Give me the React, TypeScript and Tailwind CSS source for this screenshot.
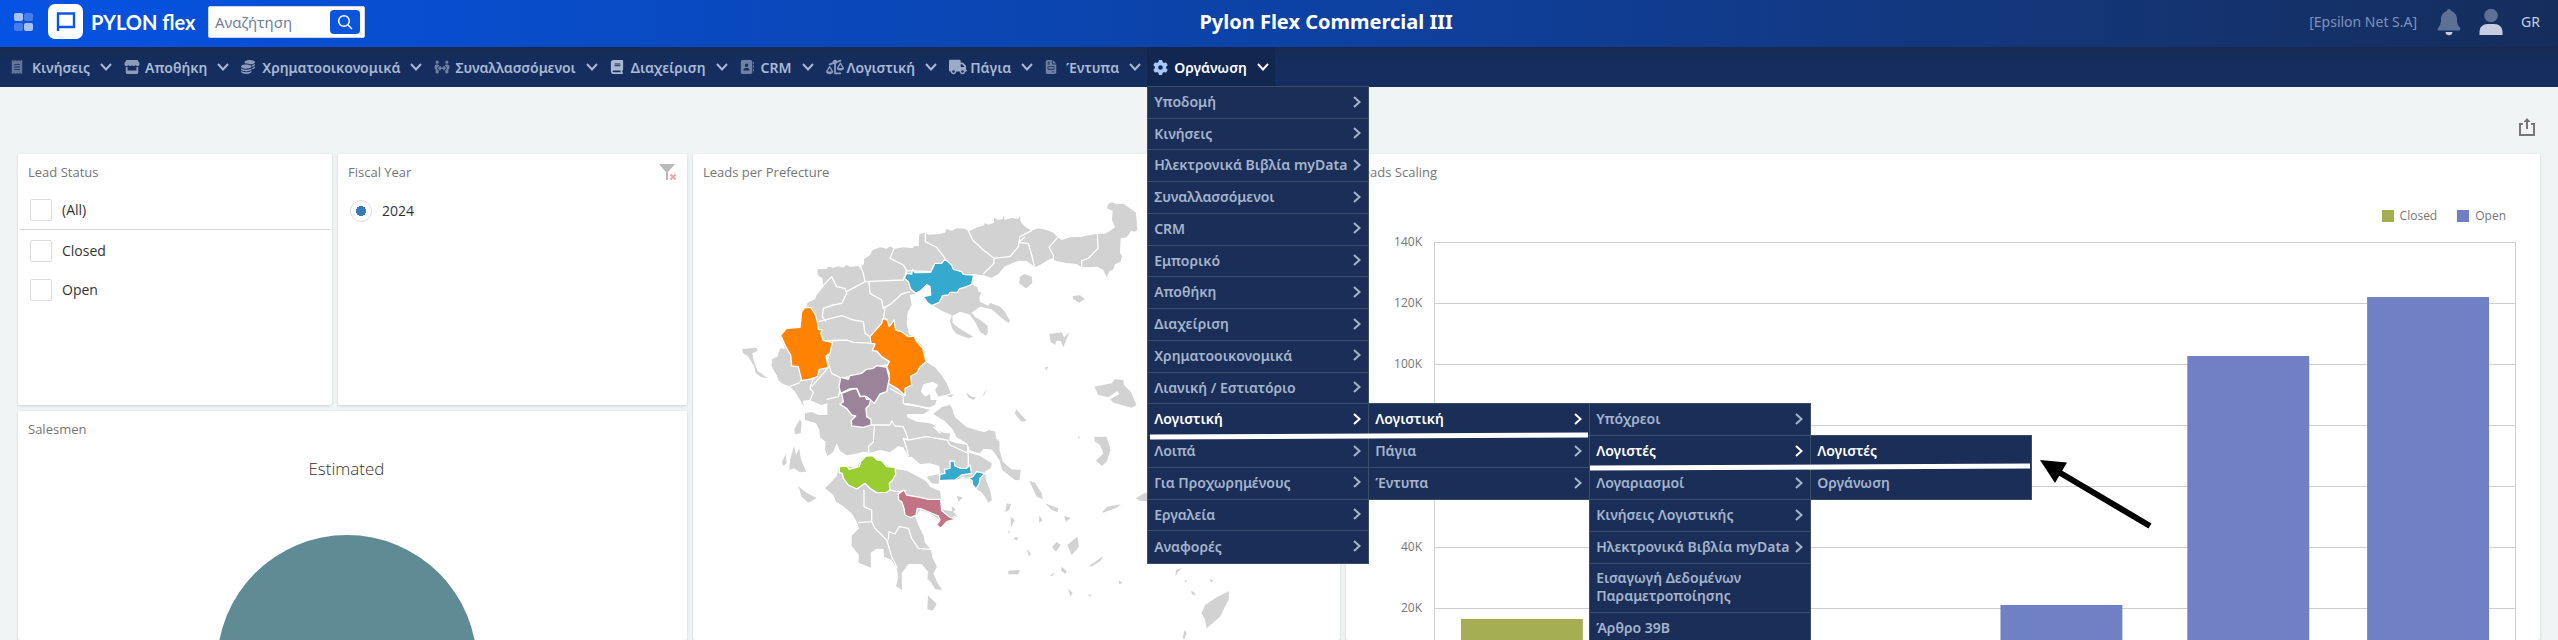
import React from "react";
import {
  FaAddressBook,
  FaBook,
  FaCoins,
  FaFileInvoice,
  FaGear,
  FaPeopleArrows,
  FaReceipt,
  FaScaleUnbalanced,
  FaStore,
  FaTruck,
} from "react-icons/fa6";

type MenuItem = { label: string; leaf?: boolean; active?: boolean; menu?: React.ReactNode };

function ChevronDown() {
  return (
    <svg viewBox="0 0 12 8" className="h-2 w-3" fill="none" stroke="currentColor" strokeWidth="2">
      <path d="M1 1l5 5.5L11 1" />
    </svg>
  );
}

function ChevronRight() {
  return (
    <svg viewBox="0 0 8 12" className="h-3 w-2 shrink-0" fill="none" stroke="currentColor" strokeWidth="2">
      <path d="M1 1l5.5 5L1 11" />
    </svg>
  );
}

function Menu({ items, className }: { items: MenuItem[]; className: string }) {
  return (
    <ul className={`absolute w-[222px] border border-[#3b5066] bg-[#1b2e57] ${className}`}>
      {items.map((item, i) => (
        <li
          key={item.label}
          className={`relative font-semibold ${i < items.length - 1 ? "border-b border-[#3b5066]" : ""} ${item.active ? "text-white" : "text-[#a3b4ce]"}`}
        >
          <button type="button" className="flex h-full min-h-[31px] w-full items-center justify-between pr-[7px] pb-0.5 pl-1.5 text-left leading-[17px]">
            <span>{item.label}</span>
            {!item.leaf && <ChevronRight />}
          </button>
          {item.menu}
        </li>
      ))}
    </ul>
  );
}

const accountantsMenu: MenuItem[] = [
  { label: "Λογιστές", active: true, leaf: true },
  { label: "Οργάνωση", leaf: true },
];

const accountingDetailMenu: MenuItem[] = [
  { label: "Υπόχρεοι" },
  {
    label: "Λογιστές",
    active: true,
    menu: <Menu items={accountantsMenu} className="-top-px left-full" />,
  },
  { label: "Λογαριασμοί" },
  { label: "Κινήσεις Λογιστικής" },
  { label: "Ηλεκτρονικά Βιβλία myData" },
  { label: "Εισαγωγή Δεδομένων Παραμετροποίησης", leaf: true },
  { label: "Άρθρο 39Β", leaf: true },
];

const accountingMenu: MenuItem[] = [
  {
    label: "Λογιστική",
    active: true,
    menu: (
      <Menu
        items={accountingDetailMenu}
        className="-top-px left-full [&>li:nth-child(6)>button]:h-12 [&>li:nth-child(6)>button]:leading-[18px]"
      />
    ),
  },
  { label: "Πάγια" },
  { label: "Έντυπα" },
];

const organisationMenu: MenuItem[] = [
  { label: "Υποδομή" },
  { label: "Κινήσεις" },
  { label: "Ηλεκτρονικά Βιβλία myData" },
  { label: "Συναλλασσόμενοι" },
  { label: "CRM" },
  { label: "Εμπορικό" },
  { label: "Αποθήκη" },
  { label: "Διαχείριση" },
  { label: "Χρηματοοικονομικά" },
  { label: "Λιανική / Εστιατόριο" },
  {
    label: "Λογιστική",
    active: true,
    menu: <Menu items={accountingMenu} className="-top-px left-full" />,
  },
  { label: "Λοιπά" },
  { label: "Για Προχωρημένους" },
  { label: "Εργαλεία" },
  { label: "Αναφορές" },
];

const navItems = [
  { label: "Κινήσεις", icon: <FaReceipt className="h-3.5 w-3 opacity-50" /> },
  { label: "Αποθήκη", icon: <FaStore className="size-4 opacity-80" /> },
  { label: "Χρηματοοικονομικά", icon: <FaCoins className="size-3.5 opacity-80" /> },
  { label: "Συναλλασσόμενοι", icon: <FaPeopleArrows className="size-4 opacity-60" /> },
  { label: "Διαχείριση", icon: <FaBook className="size-3.5" /> },
  { label: "CRM", icon: <FaAddressBook className="size-3.5 opacity-60" /> },
  { label: "Λογιστική", icon: <FaScaleUnbalanced className="size-[18px] opacity-80" /> },
  { label: "Πάγια", icon: <FaTruck className="size-[18px] opacity-90" /> },
  { label: "Έντυπα", icon: <FaFileInvoice className="h-3.5 w-3 opacity-60" /> },
];

function Header() {
  return (
    <header className="flex h-[47px] items-center bg-linear-to-r from-[#0553e3] via-[#0c42a5] to-[#152d5c] pr-[18px] pb-1 pl-3.5 text-white">
      <button type="button" aria-label="Apps">
        <svg viewBox="0 0 20 20" className="size-5" fill="#fff">
          <rect x="0" y="1" width="9" height="8" rx="2" opacity=".65" />
          <rect x="10" y="1" width="9" height="8" rx="2" opacity=".25" />
          <rect x="0" y="11" width="9" height="8" rx="2" opacity=".25" />
          <rect x="10" y="11" width="9" height="8" rx="2" opacity=".65" />
        </svg>
      </button>
      <a href="#home" className="ml-3.5 flex items-center">
        <svg viewBox="0 0 35 35" className="size-[35px]">
          <rect width="35" height="35" rx="7" fill="#fff" />
          <path d="M10 27V9.500h16v13.500H10" fill="none" stroke="#0b57e0" strokeWidth="2.400" />
        </svg>
        <span className="ml-2 w-[104px] font-['Lato'] text-[20px] leading-6 font-bold whitespace-nowrap">PYLON flex</span>
      </a>
      <form className="ml-[13px] flex h-8 w-[157px] items-center rounded-xs border border-[#c9d4ea] bg-white pr-1 pl-1.5">
        <input
          aria-label="Αναζήτηση"
          placeholder="Αναζήτηση"
          className="w-full min-w-0 text-[15px] leading-5 text-slate-700 outline-none placeholder:text-[#71809a]"
        />
        <button type="submit" aria-label="Search" className="flex h-6 w-[30px] shrink-0 items-center justify-center rounded-sm bg-[#0b55dd]">
          <svg viewBox="0 0 16 16" className="size-4" fill="none" stroke="#fff" strokeWidth="1.500">
            <circle cx="7" cy="7" r="5.300" />
            <path d="M11 11l4 4" />
          </svg>
        </button>
      </form>
      <h1 className="flex-1 pr-[22px] text-center text-[20px] leading-6 font-bold">Pylon Flex Commercial III</h1>
      <span className="text-[14px] leading-5 text-[#7f93ba]">[Epsilon Net S.A]</span>
      <button type="button" aria-label="Notifications" className="ml-5">
        <svg viewBox="0 0 24 28" className="h-7 w-6">
          <path d="M12 1c-1.200 0-2 .8-2 2C6.500 4 4 7 4 11c0 5-1.300 7-3 9-.8 1-.2 2.500 1 2.500h20c1.200 0 1.800-1.500 1-2.500-1.700-2-3-4-3-9 0-4-2.500-7-6-8 0-1.200-.8-2-2-2z" fill="#5d7096" />
          <path d="M8.500 24h7c0 2-1.500 3.300-3.500 3.300S8.500 26 8.500 24z" fill="#c5cde0" />
        </svg>
      </button>
      <button type="button" aria-label="Account" className="ml-[18px]">
        <svg viewBox="0 0 24 28" className="h-7 w-6">
          <circle cx="12" cy="7.500" r="6.800" fill="#5d7096" />
          <path d="M.5 27v-3c0-5 3.500-8 8-8h7c4.500 0 8 3 8 8v3z" fill="#c5cde0" />
        </svg>
      </button>
      <button type="button" className="ml-[18px] text-[14px] leading-5 text-[#c5cde0]">GR</button>
    </header>
  );
}

function Nav() {
  return (
    <nav className="relative z-20 flex h-10 items-stretch bg-linear-to-b from-[#162a52] to-[#152e5f] to-40% pl-[5px] text-[14px] font-semibold text-[#a9b9d3]">
      {navItems.map((item) => (
        <button key={item.label} type="button" className="flex items-center px-1.5">
          <span className="flex w-[21px] justify-start">{item.icon}</span>
          {item.label}
          <span className="ml-2.5">
            <ChevronDown />
          </span>
        </button>
      ))}
      <div className="relative">
        <button type="button" aria-expanded="true" className="flex h-full items-center bg-[#12274f] px-1.5 text-white">
          <span className="flex w-[21px] text-[#a9c8fa]">
            <FaGear className="size-[15px]" />
          </span>
          Οργάνωση
          <span className="ml-2.5">
            <ChevronDown />
          </span>
        </button>
        <div className="absolute -top-px left-0">
          <Menu items={organisationMenu} className="top-10 left-0 grid h-[478px] auto-rows-fr" />
          <Annotations />
        </div>
      </div>
    </nav>
  );
}

function Annotations() {
  return (
    <svg viewBox="0 0 1020 500" className="pointer-events-none absolute top-10 left-0 h-[500px] w-[1020px] max-w-none">
      <path d="M3 351L441 349" stroke="#fff" strokeWidth="5" />
      <path d="M443 382L883 380" stroke="#fff" strokeWidth="5" />
      <path d="M910 385L1003 440" stroke="#000" strokeWidth="6" />
      <path d="M893 374L920 376.500L908 397z" fill="#000" />
    </svg>
  );
}

function Card({ title, action, children, className = "" }: { title: string; action?: React.ReactNode; children?: React.ReactNode; className?: string }) {
  return (
    <section className={`flex flex-col overflow-hidden rounded-xs bg-white shadow-[0_1px_3px_rgba(0,0,0,0.14)] ${className}`}>
      <div className="flex h-9 shrink-0 items-center justify-between pr-2.5 pl-2.5">
        <h2 className="text-[13px] leading-5 text-[#767676]">{title}</h2>
        {action}
      </div>
      {children}
    </section>
  );
}

function StatusFilter() {
  return (
    <div className="flex flex-col px-0.5 text-[14px] leading-5 text-[#333]">
      <label className="flex h-10 items-center gap-2.5 border-b border-[#d6d6d6] pl-2.5">
        <input type="checkbox" className="size-[22px] appearance-none rounded-xs border border-[#dcdcdc]" />
        (All)
      </label>
      <label className="mt-px flex h-[39px] items-center gap-2.5 pl-2.5">
        <input type="checkbox" className="size-[22px] appearance-none rounded-xs border border-[#dcdcdc]" />
        Closed
      </label>
      <label className="flex h-[39px] items-center gap-2.5 pl-2.5">
        <input type="checkbox" className="size-[22px] appearance-none rounded-xs border border-[#dcdcdc]" />
        Open
      </label>
    </div>
  );
}

function ClearFilterIcon() {
  return (
    <svg viewBox="0 0 18 18" className="size-[18px]">
      <path d="M0 1h16L9 9v8H7V9z" fill="#b9b9b9" />
      <path d="M11.500 11.500l5 5m0-5l-5 5" stroke="#f0a0a0" strokeWidth="1.800" />
    </svg>
  );
}

const northernMainland =
  "383,388 410,387 415,380 430,383 445,379 460,383 470,375 480,381 505,378 510,384 522,372 522,358 540,345 548,330 570,322 590,326 600,319 612,326 640,322 668,325 672,319 686,318 688,282 706,278 715,284 745,283 765,278 770,267 785,272 800,265 825,266 835,274 850,268 862,262 880,257 885,249 895,254 912,248 912,233 925,240 938,237 940,228 945,240 965,234 985,236 990,229 992,245 1005,260 1025,272 1045,265 1070,270 1090,278 1103,292 1115,300 1140,292 1170,291 1200,285 1222,282 1245,281 1258,274 1275,262 1266,240 1268,212 1250,205 1255,192 1266,187 1280,193 1300,191 1320,205 1338,218 1342,270 1335,275 1323,273 1310,292 1292,295 1290,340 1296,348 1292,365 1275,373 1270,388 1257,395 1250,412 1240,390 1222,380 1175,382 1160,372 1130,369 1095,362 1090,353 1070,362 1050,375 1034,382 1020,370 1010,363 985,362 960,373 945,379 925,402 905,413 880,406 850,402 848,435 862,442 865,455 875,458 868,470 870,485 895,498 900,488 930,500 945,515 960,543 955,549 930,530 905,508 870,500 845,518 855,530 875,543 893,558 893,580 887,587 870,575 855,545 838,523 810,515 787,527 788,548 805,563 850,590 835,595 800,582 788,568 780,545 785,525 755,512 735,500 725,495 700,470 722,466 722,445 712,436 692,450 680,460 660,465 665,495 652,520 650,550 657,583 672,587 676,598 695,615 702,630 708,665 735,682 755,706 770,730 782,760 745,770 735,750 745,735 728,725 700,733 693,755 705,770 720,762 722,780 740,780 735,795 715,803 690,797 655,790 640,795 690,802 720,810 700,822 650,822 652,832 680,845 720,850 735,857 740,870 765,880 780,880 778,900 760,897 800,910 830,915 832,937 870,948 905,970 903,983 885,995 888,1020 900,1050 906,1080 895,1088 885,1070 875,1057 860,1048 855,1045 835,1015 820,1010 800,1020 748,1022 750,1000 748,978 720,970 690,972 665,950 655,950 640,922 625,918 600,937 570,930 540,938 520,935 495,942 470,946 450,932 440,910 430,935 412,948 405,930 407,905 390,892 388,870 378,850 345,840 345,820 365,816 385,825 412,825 412,790 395,795 375,787 358,780 338,782 342,800 315,755 298,738 280,733 265,720 260,705 245,680 246,658 262,650 270,625 285,628 272,585 290,565 310,568 330,560 335,520 350,500 352,488 375,478 380,465 400,440 397,415 383,405";

const peloponnese =
  "448,980 470,978 500,985 515,955 540,947 560,955 590,975 620,988 650,992 680,1008 707,1022 722,1042 750,1053 753,1075 755,1110 800,1135 775,1142 755,1163 742,1155 750,1140 720,1120 690,1110 675,1130 685,1155 700,1185 705,1208 722,1228 728,1255 741,1280 730,1300 742,1328 757,1350 735,1347 722,1325 712,1317 714,1295 695,1272 655,1272 635,1300 636,1350 618,1338 625,1312 620,1285 605,1260 582,1250 580,1227 560,1226 542,1238 543,1283 530,1278 520,1274 505,1268 507,1245 485,1218 485,1188 507,1165 500,1145 485,1120 455,1095 438,1085 430,1065 405,1045 422,1028 440,1008";

const euboea =
  "728,822 755,800 780,793 788,805 795,830 830,860 870,872 885,875 895,869 917,873 920,897 930,905 930,930 940,965 965,987 994,988 990,1022 975,1022 935,990 927,960 905,930 880,928 870,942 838,932 832,912 798,892 788,870 765,845 740,830";

const islands = [
  "157,627 200,623 203,632 187,640 192,665 202,692 233,715 215,712 197,700 192,678 175,650 158,638",
  "1003,402 1025,410 1027,430 1008,445 987,430 990,410",
  "1148,468 1170,466 1185,477 1168,488 1150,478",
  "1078,582 1115,577 1122,592 1138,577 1128,602 1120,622 1112,602 1100,602 1095,615 1082,606",
  "1213,740 1265,730 1275,718 1300,720 1302,735 1322,755 1340,795 1325,803 1270,788 1260,778 1288,763 1282,753 1255,772 1225,765",
  "978,808 1010,842 995,845 975,822",
  "1212,890 1250,890 1262,930 1250,965 1236,978 1218,962 1240,940 1230,915 1215,905",
  "330,838 335,848 332,880 315,883 313,868",
  "312,918 318,945 328,925 332,955 348,995 330,997 312,985 298,990 300,960",
  "287,943 290,970 280,978 276,965",
  "325,1038 345,1055 380,1075 355,1088 335,1070",
  "710,1010 745,1003 750,1015 745,1032 725,1030 715,1018",
  "1018,1022 1035,1028 1055,1060 1058,1078 1040,1070 1028,1045",
  "1065,1090 1105,1105 1103,1117 1085,1110",
  "950,1090 963,1093 958,1110 946,1117",
  "962,1130 974,1140 963,1162",
  "1048,1125 1058,1143 1047,1147",
  "1122,1128 1142,1133 1128,1145",
  "1237,1115 1252,1100 1293,1093 1280,1103 1240,1118",
  "1337,1075 1365,1058 1390,1060 1390,1085 1350,1082",
  "1150,1200 1162,1190 1167,1220 1145,1245 1132,1215",
  "1100,1205 1112,1215 1098,1235 1086,1222",
  "970,1195 985,1190 980,1202",
  "1010,1227 1023,1240 1017,1250",
  "955,1292 990,1290 985,1303 955,1303",
  "1115,1280 1130,1293 1127,1302 1113,1292",
  "1198,1277 1240,1248 1232,1262 1205,1280",
  "1080,1305 1098,1297 1085,1309",
  "1285,1320 1298,1328 1288,1333",
  "1134,1347 1148,1358 1142,1370",
  "714,1366 740,1392 728,1412 712,1408",
  "1617,1353 1616,1378 1590,1430 1550,1465 1545,1440 1535,1420 1545,1395 1580,1372",
  "1458,1290 1476,1284 1464,1296 1456,1310",
  "1483,1322 1490,1320 1488,1330",
  "1558,1318 1570,1320 1564,1328",
  "1502,1352 1512,1356 1518,1368 1506,1362",
  "1484,1470 1490,1480 1482,1500 1478,1490",
  "800,1068 818,1072 806,1085",
  "785,1098 797,1108 787,1118",
  "755,1108 790,1115 803,1130 770,1125",
  "828,757 845,770 858,772 850,780 835,772",
  "875,770 892,745 885,762",
  "770,768 790,762 785,772",
  "1065,682 1075,680 1068,692",
  "1165,888 1170,890 1166,900",
  "1195,1363 1206,1366 1197,1370",
  "955,1170 960,1175 956,1182",
];

const borders = [
  "397,440 425,410 440,440 465,445 470,460 455,490 430,495 400,505 397,530 408,545",
  "510,376 520,400 525,425 470,455",
  "525,425 640,420 650,392",
  "612,326 600,355 640,375 650,392 722,395",
  "706,278 706,305 740,322 765,355",
  "835,272 848,300 880,330 912,355 912,370 880,402",
  "912,355 935,352 960,350 985,320 990,290 1025,272",
  "985,308 1015,310 1025,345 1034,382",
  "985,308 1005,290",
  "1103,292 1077,322 1090,345 1090,360",
  "1222,282 1224,325 1195,355 1175,362 1175,384",
  "537,425 540,460 575,480 580,505 605,490 635,462 660,455",
  "585,505 580,540",
  "385,545 455,527 490,540 520,545 525,580 540,590",
  "395,603 470,600 490,607 550,610",
  "425,612 412,660 425,700 455,715",
  "455,715 520,700 555,682 590,675",
  "330,722 370,715 360,745 370,757 358,785",
  "365,740 400,700 412,685",
  "298,740 330,728",
  "450,750 445,770 410,778",
  "600,745 640,768 640,790 720,805",
  "540,855 600,855 605,843 615,858 640,860 650,885 655,900 710,890 770,900 780,915 835,940 835,980",
  "553,858 550,905 535,920 537,937",
  "655,900 640,895 650,925 655,948",
  "730,860 752,880",
  "600,1050 620,1055 650,1052",
  "522,1050 522,1100 545,1110 545,1145 505,1148",
  "545,1145 555,1165 590,1200 605,1250 622,1285",
  "595,1200 597,1175 615,1182 628,1160 655,1165 665,1195 685,1225 722,1228",
];

const highlighted = [
  { fill: "#36a9cf", points: "643,415 650,400 665,402 668,388 675,398 722,397 735,370 755,370 765,357 785,375 790,388 815,395 820,403 851,405 845,433 830,440 808,447 802,457 780,457 775,465 758,467 748,487 725,497 712,488 700,470 722,465 720,440 710,434 695,450 677,460 662,447 655,425" },
  { fill: "#ff8300", points: "272,585 290,565 330,562 335,515 345,503 362,502 375,522 382,545 385,568 397,570 392,580 400,602 427,607 420,640 408,648 415,683 388,688 382,710 362,717 335,722 325,680 305,678 302,645 287,620" },
  { fill: "#ff8300", points: "540,590 575,550 578,537 590,537 598,560 612,540 617,570 635,575 655,590 672,588 680,605 698,625 708,665 690,680 680,700 662,708 665,735 645,745 645,767 625,748 595,730 598,700 590,680 598,665 575,650 560,633 547,632 555,612 543,610" },
  { fill: "#9b8399", points: "452,712 475,718 480,707 515,700 530,688 550,685 560,677 590,682 598,715 590,755 570,762 553,790 530,770 512,770 500,745 478,747 452,760 447,740" },
  { fill: "#9b8399", points: "455,760 485,748 500,746 510,770 525,768 530,778 542,778 538,795 528,805 530,830 543,838 543,855 520,862 485,858 484,842 497,828 485,825 470,805 450,793 460,785" },
  { fill: "#9acd32", points: "448,980 470,978 478,988 508,980 512,965 528,948 548,947 562,960 575,962 590,980 615,982 617,1003 608,1020 598,1030 600,1050 590,1057 560,1058 540,1045 525,1030 500,1047 475,1035 460,1015 457,1000 448,998" },
  { fill: "#36a9cf", points: "748,1022 750,1003 765,1000 763,988 780,985 780,963 792,963 795,978 812,985 830,985 840,975 845,1000 815,1005 795,1020" },
  { fill: "#36a9cf", points: "835,1015 848,1010 860,995 884,1000 870,1015 868,1030 858,1047 848,1035 846,1022" },
  { fill: "#c27385", points: "625,1062 642,1050 650,1065 690,1072 715,1078 752,1078 755,1112 780,1132 801,1137 770,1145 752,1165 740,1155 750,1140 745,1128 695,1107 682,1105 678,1125 662,1133 645,1125 642,1105 635,1085 626,1080" },
];

function PrefectureMap() {
  return (
    <svg viewBox="9 150 1941 1350" preserveAspectRatio="xMidYMin meet" className="h-[450px] w-full shrink-0" role="img" aria-label="Leads per Prefecture">
      <g fill="#d2d2d2">
        <polygon points={northernMainland} />
        <polygon points={peloponnese} />
        {islands.map((points) => (
          <polygon key={points} points={points} />
        ))}
      </g>
      <polygon points={euboea} fill="#d2d2d2" stroke="#fff" strokeWidth="3" />
      <g fill="none" stroke="#fff" strokeWidth="4" strokeLinejoin="round">
        {borders.map((points) => (
          <polyline key={points} points={points} />
        ))}
      </g>
      <g stroke="#fff" strokeWidth="4" strokeLinejoin="round">
        {highlighted.map((region) => (
          <polygon key={region.points} points={region.points} fill={region.fill} />
        ))}
      </g>
    </svg>
  );
}

function ScalingChart() {
  return (
    <div className="flex flex-col pr-6 pl-[34px] text-[12px] leading-4 text-[#767676]">
      <div className="flex h-[52px] items-center justify-end gap-5 pr-2.5">
        <span className="flex items-center gap-1.5">
          <span className="size-3 bg-[#a6ae53]" />
          Closed
        </span>
        <span className="flex items-center gap-1.5">
          <span className="size-3 bg-[#7080c4]" />
          Open
        </span>
      </div>
      <div className="flex">
        <div className="-mt-2 flex w-[54px] shrink-0 flex-col pr-3 text-right">
          {["140K", "120K", "100K", "80K", "60K", "40K", "20K"].map((tick) => (
            <span key={tick} className="h-[61px]">
              {tick}
            </span>
          ))}
        </div>
        <svg viewBox="0 0 1083 400" preserveAspectRatio="none" className="h-[400px] w-full min-w-0" role="img" aria-label="Leads Scaling">
          <g stroke="#cfcfcf" strokeWidth="1">
            {[0, 1, 2, 3, 4, 5, 6].map((i) => (
              <line key={i} x1="0" x2="1082" y1={i * 61 + 0.5} y2={i * 61 + 0.5} />
            ))}
            <path d="M.5 0V400M1082.500 0V400" />
          </g>
          <rect x="27" y="377" width="122" height="30" fill="#a6ae53" />
          <g fill="#7080c4">
            <rect x="567" y="363" width="122" height="50" />
            <rect x="754" y="114" width="122" height="300" />
            <rect x="934" y="55" width="122" height="350" />
          </g>
        </svg>
      </div>
    </div>
  );
}

export default function App() {
  return (
    <div className="flex h-screen flex-col overflow-hidden bg-[#f0f4f5] font-['Noto_Sans','Open_Sans',sans-serif]">
      <Header />
      <Nav />
      <main className="flex min-h-0 flex-1 flex-col px-[18px] font-['Open_Sans','Noto_Sans',sans-serif]">
        <div className="flex h-[67px] shrink-0 items-center justify-end pt-3 pr-1">
          <button type="button" aria-label="Export">
            <svg viewBox="0 0 18 20" className="h-5 w-[18px]" fill="none" stroke="#767676" strokeWidth="2">
              <path d="M5 7H2v11h14V7h-3M9 12V3" />
              <path d="M5.500 5L9 1l3.500 4z" fill="#767676" stroke="none" />
            </svg>
          </button>
        </div>
        <div className="grid min-h-0 flex-1 grid-cols-[669fr_647fr_1194fr] gap-1.5">
          <div className="flex min-h-0 min-w-0 flex-col gap-1.5">
            <div className="grid h-[251px] shrink-0 grid-cols-[314fr_349fr] gap-1.5">
              <Card title="Lead Status">
                <StatusFilter />
              </Card>
              <Card title="Fiscal Year" action={<ClearFilterIcon />}>
                <label className="flex h-[42px] items-center gap-2.5 pl-3 text-[14px] leading-5 text-[#333]">
                  <input
                    type="radio"
                    name="year"
                    defaultChecked
                    className="size-[22px] appearance-none rounded-full border border-[#dcdcdc] bg-[radial-gradient(circle,#337ab7_0_5px,transparent_5px)]"
                  />
                  2024
                </label>
              </Card>
            </div>
            <Card title="Salesmen" className="flex-1">
              <div className="flex flex-col items-center pr-3">
                <h3 className="mt-2.5 text-[17px] leading-6 font-light text-[#333]">Estimated</h3>
                <svg viewBox="0 0 260 260" className="mt-[54px] size-[260px] shrink-0" role="img" aria-label="Estimated">
                  <circle cx="130" cy="130" r="130" fill="#5f8b95" />
                </svg>
              </div>
            </Card>
          </div>
          <Card title="Leads per Prefecture">
            <PrefectureMap />
          </Card>
          <Card title="Leads Scaling">
            <ScalingChart />
          </Card>
        </div>
      </main>
    </div>
  );
}
